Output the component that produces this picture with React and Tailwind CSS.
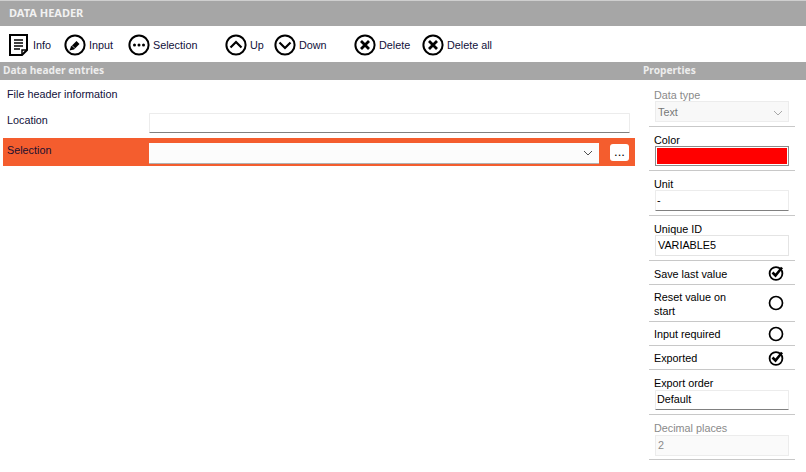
const FONT = "font-['Liberation_Sans',sans-serif]";
const HEAD_FONT = "font-['Noto_Sans',sans-serif]";

function Circle({ children }) {
  return (
    <svg width="22" height="22" viewBox="0 0 22 22" fill="none" stroke="#000" className="shrink-0">
      <circle cx="11" cy="11" r="9.6" strokeWidth="2" />
      {children}
    </svg>
  );
}

const InfoIcon = () => (
  <svg width="21" height="22" viewBox="0 0 21 22" fill="none" stroke="#000" className="shrink-0">
    <path d="M1 1h17v15l-5 5H1z" strokeWidth="2" />
    <path d="M13 21v-5h5" strokeWidth="1.500" />
    <path d="M5 6h9M5 9h9M5 12h9M5 15h6" strokeWidth="1.500" />
  </svg>
);

const icons = {
  input: (
    <Circle>
      <path d="M5.500 16.500l1.500-4 5.500-5.500 3 3-5.500 5.500z" fill="#000" stroke="none" />
      <path d="M8 11.500l3 3" stroke="#fff" strokeWidth="0.700" />
    </Circle>
  ),
  selection: (
    <Circle>
      <circle cx="6.500" cy="11" r="1.500" fill="#000" stroke="none" />
      <circle cx="11" cy="11" r="1.500" fill="#000" stroke="none" />
      <circle cx="15.500" cy="11" r="1.500" fill="#000" stroke="none" />
    </Circle>
  ),
  up: (
    <Circle>
      <path d="M5.500 13.500L11 8l5.500 5.500" strokeWidth="2.200" />
    </Circle>
  ),
  down: (
    <Circle>
      <path d="M5.500 8.500L11 14l5.500-5.500" strokeWidth="2.200" />
    </Circle>
  ),
  del: (
    <Circle>
      <path d="M7 7l8 8M15 7l-8 8" strokeWidth="2.800" />
    </Circle>
  ),
};

function ToolButton({ icon, label, className }) {
  return (
    <div className={`flex items-center gap-[3px] ${className}`}>
      {icon}
      <span>{label}</span>
    </div>
  );
}

function Checked() {
  return (
    <svg width="16" height="16" viewBox="0 0 16 16" fill="none" stroke="#000" className="shrink-0">
      <circle cx="8" cy="8.500" r="6.400" strokeWidth="1.800" />
      <path d="M4.500 7.500l3 3L14 2.500" strokeWidth="2.600" />
    </svg>
  );
}

function Unchecked() {
  return (
    <svg width="16" height="16" viewBox="0 0 16 16" fill="none" stroke="#000" className="shrink-0">
      <circle cx="8" cy="8" r="6.500" strokeWidth="1.700" />
    </svg>
  );
}

function Chevron({ color }) {
  return (
    <svg width="10" height="6" viewBox="0 0 10 6" fill="none" stroke={color}>
      <path d="M1 1l4 4 4-4" />
    </svg>
  );
}

function Field({ label, height, disabled, children }) {
  return (
    <div className={`flex flex-col border-b border-[#c8c8c8] px-[6px] ${height}`}>
      <div className={`h-[13px] -ml-[1px] leading-[15px] ${disabled ? "text-[#8a8a8a]" : "text-black"}`}>{label}</div>
      {children}
    </div>
  );
}

function Toggle({ label, checked, height, pad }) {
  return (
    <div className={`flex items-center justify-between border-b border-[#c8c8c8] pl-[5px] pr-[11px] ${height}`}>
      <span className={`w-[90px] leading-[14px] text-black ${pad}`}>{label}</span>
      {checked ? <Checked /> : <Unchecked />}
    </div>
  );
}

const inputBox = "bg-white border border-[#ececec] border-b-[#808080] px-[1px] rounded-[1px]";

export default function App() {
  return (
    <div className={`w-[806px] h-[472px] flex flex-col overflow-hidden bg-white text-[10.8px] text-[#10103a] ${FONT}`}>
      <div className={`h-[26px] shrink-0 bg-[#a6a6a6] border-t border-[#cfcfcf] flex items-center pl-[9px] text-[11px] font-bold text-[#f2f2f2] ${HEAD_FONT}`}>
        DATA HEADER
      </div>

      <div className="h-[36px] shrink-0 flex items-center pl-[9px] pt-[2px]">
        <ToolButton icon={<InfoIcon />} label="Info" className="w-[55px]" />
        <ToolButton icon={icons.input} label="Input" className="w-[64px]" />
        <ToolButton icon={icons.selection} label="Selection" className="w-[97px]" />
        <ToolButton icon={icons.up} label="Up" className="w-[49px]" />
        <ToolButton icon={icons.down} label="Down" className="w-[80px]" />
        <ToolButton icon={icons.del} label="Delete" className="w-[68px]" />
        <ToolButton icon={icons.del} label="Delete all" />
      </div>

      <div className={`h-[18px] shrink-0 bg-[#a6a6a6] flex items-center justify-between text-[10.2px] font-bold text-[#ededed] ${HEAD_FONT}`}>
        <span className="pl-[3px]">Data header entries</span>
        <span className="w-[163px]">Properties</span>
      </div>

      <div className="flex-1 flex">
        <div className="w-[649px] pl-[3px] pr-[14px] flex flex-col">
          <div className="h-[33px] pl-[4px] pt-[6px] leading-[16px]">File header information</div>
          <div className="h-[25px] flex items-start pl-[4px]">
            <span className="w-[142px] leading-[14px]">Location</span>
            <div className={`w-[481px] h-[20px] ${inputBox}`} />
          </div>
          <div className="h-[28px] bg-[#f45d2e] flex items-start pl-[4px]">
            <span className="w-[142px] pt-[5px] leading-[15px] text-[#1a1030]">Selection</span>
            <div className="w-[450px] h-[21px] mt-[5px] bg-[#fcfcfc] border-b border-[#b0b0b0] flex items-center justify-end pr-[6px]">
              <Chevron color="#505050" />
            </div>
            <div className="w-[19px] h-[17px] mt-[6px] ml-[11px] bg-white rounded-[3px] flex items-center justify-center leading-none pb-[3px] text-[13px] text-black">
              ...
            </div>
          </div>
        </div>

        <div className="w-[146px] flex flex-col">
          <Field label="Data type" height="h-[47px] pt-[8px]" disabled>
            <div className="h-[21px] bg-[#f8f8f8] border border-[#ececec] flex items-center justify-between pl-[2px] pr-[5px] pt-[2px] text-[#777]">
              Text
              <Chevron color="#a8a8a8" />
            </div>
          </Field>
          <Field label="Color" height="h-[44px] pt-[6px]">
            <div className="h-[20px] bg-[#ff0000] border border-[#8c8c8c] outline outline-1 -outline-offset-2 outline-white" />
          </Field>
          <Field label="Unit" height="h-[45px] pt-[6px]">
            <div className={`h-[21px] flex items-center text-black ${inputBox}`}>-</div>
          </Field>
          <Field label="Unique ID" height="h-[45px] pt-[6px]">
            <div className="h-[21px] flex items-center px-[2px] text-black bg-white border border-[#e4e4e4]">VARIABLE5</div>
          </Field>
          <Toggle label="Save last value" checked height="h-[24px]" pad="pt-[2px]" />
          <Toggle label="Reset value on start" height="h-[37px]" pad="pt-[1px]" />
          <Toggle label="Input required" height="h-[24px]" />
          <Toggle label="Exported" checked height="h-[24px]" />
          <Field label="Export order" height="h-[45px] pt-[6px]">
            <div className={`h-[20px] mt-[1px] pb-[2px] flex items-center text-black ${inputBox}`}>Default</div>
          </Field>
          <Field label="Decimal places" height="h-[45px] pt-[6px]" disabled>
            <div className="h-[21px] mt-[1px] flex items-center px-[2px] text-[#8a8a8a] bg-[#fafafa] border border-[#ececec]">2</div>
          </Field>
        </div>
      </div>
    </div>
  );
}
